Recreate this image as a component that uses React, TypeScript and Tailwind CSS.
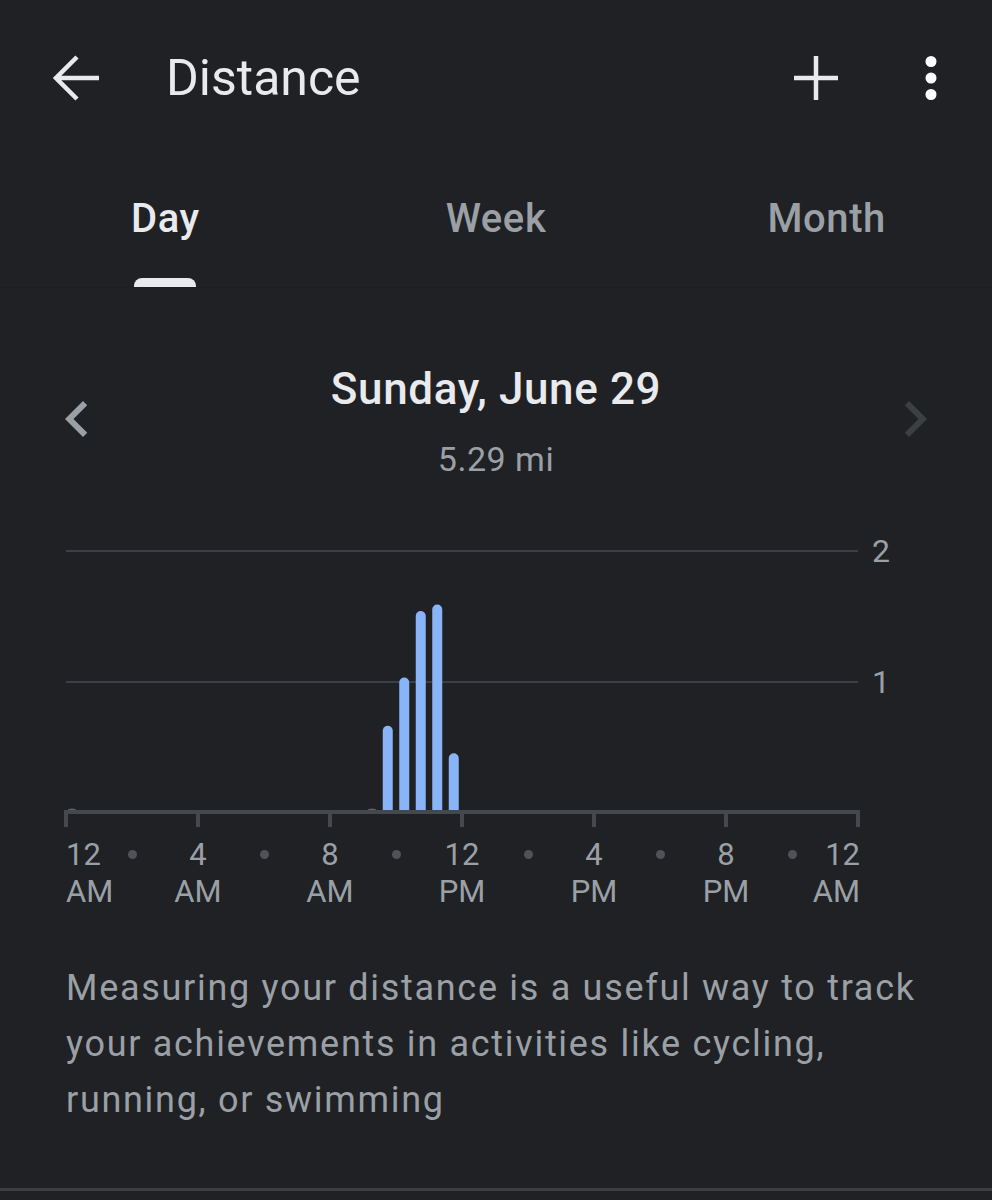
import React from 'react';

const font = { fontFamily: 'Roboto, "Noto Sans", sans-serif' };

// 30-minute buckets, value in miles
const bars = [
  { t: 9.75, v: 0.66 },
  { t: 10.25, v: 1.03 },
  { t: 10.75, v: 1.54 },
  { t: 11.25, v: 1.59 },
  { t: 11.75, v: 0.45 },
];

const ticks = [0, 1, 2, 3, 4, 5, 6];

const labels = [
  ['12', 'AM'],
  ['4', 'AM'],
  ['8', 'AM'],
  ['12', 'PM'],
  ['4', 'PM'],
  ['8', 'PM'],
  ['12', 'AM'],
];

function Chart() {
  // svg spans page x 64..860, y 548..830
  const base = 264;
  const unit = 130.5;
  return (
    <svg width="796" height="282" viewBox="0 0 796 282" className="block">
      <rect x="2" y="2" width="792" height="2" fill="#3c3f43" />
      <rect x="2" y="133" width="792" height="2" fill="#3c3f43" />
      {bars.map(b => {
        const cx = 2 + 33 * b.t;
        const x = cx - 5;
        const top = base - b.v * unit;
        return (
          <path
            key={b.t}
            d={`M${x} ${base} V${top + 5} A5 5 0 0 1 ${x + 10} ${top + 5} V${base} Z`}
            fill="#8ab4f8"
          />
        );
      })}
      <ellipse cx="8" cy="262" rx="4" ry="1.5" fill="#5f6368" />
      <ellipse cx="308" cy="262" rx="4" ry="1.5" fill="#5f6368" />
      <rect x="0" y="262" width="796" height="4" fill="#45484c" />
      {ticks.map(i => (
        <rect key={i} x={132 * i} y="262" width="4" height="17" fill="#45484c" />
      ))}
    </svg>
  );
}

export default function App() {
  return (
    <div className="w-full min-h-screen bg-[#202124] flex flex-col" style={font}>
      {/* Top bar */}
      <div className="flex items-center h-[156px]">
        <svg width="48" height="48" viewBox="0 0 48 48" className="ml-[53px] shrink-0">
          <path d="M46 24H3 M24 3 L3 24 L24 45" fill="none" stroke="#e8eaed" strokeWidth="4.5" />
        </svg>
        <h1 className="ml-[65px] text-[50px] leading-none text-[#e8eaed] font-normal">Distance</h1>
        <div className="flex-1" />
        <svg width="48" height="48" viewBox="0 0 48 48" className="shrink-0">
          <path d="M24 2V46 M2 24H46" fill="none" stroke="#e8eaed" strokeWidth="4.5" />
        </svg>
        <svg width="12" height="46" viewBox="0 0 12 46" className="ml-[85px] mr-[55px] shrink-0">
          <circle cx="6" cy="6.5" r="5.5" fill="#ffffff" />
          <circle cx="6" cy="23" r="5.5" fill="#ffffff" />
          <circle cx="6" cy="39.5" r="5.5" fill="#ffffff" />
        </svg>
      </div>

      {/* Tabs */}
      <div className="grid grid-cols-3 border-b border-[#1d1e21]">
        {['Day', 'Week', 'Month'].map((tab, i) => (
          <div key={tab} className="flex flex-col items-center pt-[41px]">
            <span
              className={`text-[40px] leading-[44px] font-medium tracking-[0.6px] ${
                i === 0 ? 'text-[#e8eaed]' : 'text-[#9aa0a6]'
              }`}
            >
              {tab}
            </span>
            <div
              className={`mt-[37px] h-[9px] w-[62px] rounded-t-[8px] ${i === 0 ? 'bg-[#e8eaed]' : 'bg-transparent'}`}
            />
          </div>
        ))}
      </div>

      {/* Date */}
      <div className="flex items-center px-[41px] mt-[76px]">
        <svg width="72" height="72" viewBox="0 0 24 24" className="shrink-0 -mt-[6px]">
          <path d="M15.41 7.41L14 6l-6 6 6 6 1.41-1.41L10.83 12z" fill="#9aa0a6" />
        </svg>
        <div className="flex-1 flex flex-col items-center">
          <div className="text-[44px] leading-[50px] font-medium tracking-[0.6px] text-[#e8eaed]">Sunday, June 29</div>
          <div className="mt-[25px] text-[34px] leading-[40px] tracking-[0.5px] text-[#9aa0a6]">5.29 mi</div>
        </div>
        <svg width="72" height="72" viewBox="0 0 24 24" className="shrink-0 -mt-[6px]">
          <path d="M10 6L8.59 7.41 13.17 12l-4.58 4.59L10 18l6-6z" fill="#3c4043" />
        </svg>
      </div>

      {/* Chart */}
      <div className="flex mt-[69px] ml-[64px]">
        <Chart />
        <div className="flex flex-col ml-[12px] -mt-[15px] text-[32px] leading-[36px] text-[#9aa0a6]">
          <span>2</span>
          <span className="mt-[95px]">1</span>
        </div>
      </div>

      {/* X axis labels */}
      <div className="grid grid-cols-[repeat(13,66px)] ml-[33px] mt-[6px] text-[31px] leading-[37px] text-[#9aa0a6]">
        {labels.map((l, i) => {
          const first = i === 0;
          const last = i === labels.length - 1;
          return (
            <React.Fragment key={i}>
              <div
                className={`flex flex-col whitespace-nowrap ${
                  first ? 'items-start pl-[33px]' : last ? 'items-end pr-[31px]' : 'items-center'
                }`}
              >
                <span>{l[0]}</span>
                <span>{l[1]}</span>
              </div>
              {!last && (
                <div className="flex justify-center h-[37px] items-center">
                  <div className="w-[9px] h-[9px] rounded-full bg-[#4f5256]" />
                </div>
              )}
            </React.Fragment>
          );
        })}
      </div>

      {/* Description */}
      <p className="mt-[50px] ml-[66px] w-[870px] text-[36px] leading-[56px] tracking-[1.7px] text-[#9aa0a6]">
        Measuring your distance is a useful way to track your achievements in activities like cycling, running, or
        swimming
      </p>

      <div className="mt-[60px] border-t-[3px] border-[#3c3e42] h-[10px]" />
    </div>
  );
}
